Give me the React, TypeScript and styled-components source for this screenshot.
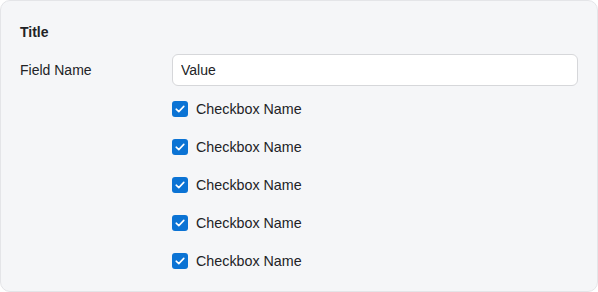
import React from 'react';
import styled, { createGlobalStyle } from 'styled-components';

const GlobalStyle = createGlobalStyle`
  body {
    margin: 0;
    font-family: 'Liberation Sans', Arial, sans-serif;
    background: #ffffff;
  }
`;

const Card = styled.div`
  box-sizing: border-box;
  width: 598px;
  height: 292px;
  padding: 19px;
  border: 1px solid #e4e5e8;
  border-radius: 10px;
  background: #f5f6f8;
  color: #222326;
`;

const Title = styled.div`
  font-size: 14px;
  font-weight: 700;
  line-height: 22px;
  margin: 1px 0 11px;
`;

const FieldGrid = styled.div`
  display: grid;
  grid-template-columns: 152px 1fr;
`;

const Label = styled.div`
  height: 32px;
  display: flex;
  align-items: center;
  font-size: 14px;
`;

const Controls = styled.div`
  display: flex;
  flex-direction: column;
`;

const Input = styled.input`
  box-sizing: border-box;
  height: 32px;
  width: 100%;
  padding: 0 8px;
  border: 1px solid #d6d7da;
  border-radius: 6px;
  background: #ffffff;
  font-family: inherit;
  font-size: 14px;
  color: #222326;
  outline: none;
`;

const CheckList = styled.div`
  display: flex;
  flex-direction: column;
  gap: 14px;
  margin-top: 11px;
`;

const CheckRow = styled.label`
  display: flex;
  align-items: center;
  gap: 8px;
  height: 24px;
  font-size: 14.3px;
`;

const Box = styled.span<{ $checked: boolean }>`
  width: 16px;
  height: 16px;
  border-radius: 3px;
  display: flex;
  align-items: center;
  justify-content: center;
  background: ${(p) => (p.$checked ? '#0b73d4' : '#ffffff')};
  border: ${(p) => (p.$checked ? 'none' : '1px solid #b9bbbf')};
`;

function Checkbox({ label, checked }: { label: string; checked: boolean }) {
  return (
    <CheckRow>
      <Box $checked={checked}>
        {checked && (
          <svg width="10" height="8" viewBox="0 0 10 8" fill="none">
            <path d="M1.2 4.2 L3.8 6.6 L8.8 1.4" stroke="#fff" strokeWidth="1.6" strokeLinecap="round" strokeLinejoin="round" />
          </svg>
        )}
      </Box>
      {label}
    </CheckRow>
  );
}

export default function App() {
  const boxes = [0, 1, 2, 3, 4];
  return (
    <>
      <GlobalStyle />
      <Card>
        <Title>Title</Title>
        <FieldGrid>
          <Label>Field Name</Label>
          <Controls>
            <Input defaultValue="Value" />
            <CheckList>
              {boxes.map((i) => (
                <Checkbox key={i} label="Checkbox Name" checked />
              ))}
            </CheckList>
          </Controls>
        </FieldGrid>
      </Card>
    </>
  );
}
